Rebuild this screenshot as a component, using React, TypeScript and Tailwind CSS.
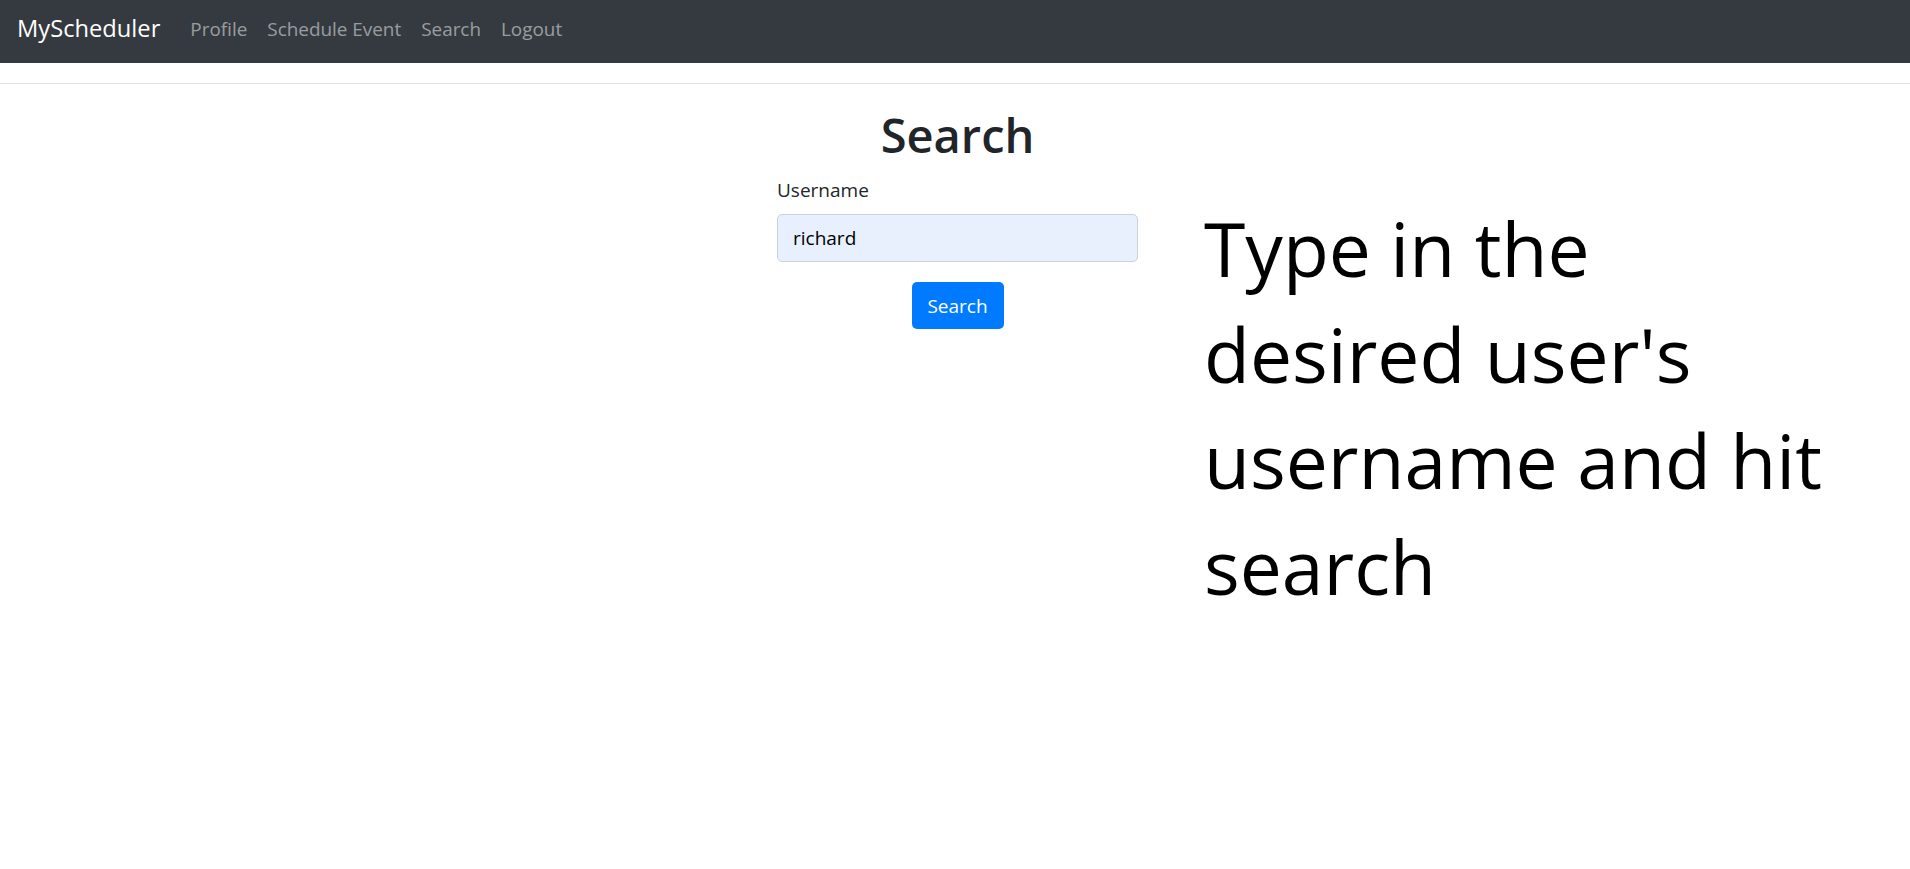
const font = { fontFamily: '"Open Sans", "Noto Sans", sans-serif' };

const links = ["Profile", "Schedule Event", "Search", "Logout"];

export default function App() {
  return (
    <div className="min-h-screen bg-white" style={font}>
      <nav className="flex h-[63px] items-center bg-[#343a40] px-[17px] pb-[5px]">
        <a href="#" className="mr-[20px] text-[23.7px] text-white">
          MyScheduler
        </a>
        <div className="flex items-center">
          {links.map((l) => (
            <a key={l} href="#" className="px-[10px] text-[18.9px] text-white/50">
              {l}
            </a>
          ))}
        </div>
      </nav>

      <div className="mt-[20px] h-px bg-[#e3e3e3]" />

      <main className="grid grid-cols-[1fr_361px_1fr] pl-[5px] pt-[23px]">
        <div />
        <div className="flex flex-col">
          <h1 className="mb-[12px] text-center text-[47px] font-semibold leading-[1.2] text-[#212529]">
            Search
          </h1>
          <label className="mb-[9px] text-[19px] leading-[30px] text-[#212529]">Username</label>
          <input
            defaultValue="richard"
            className="h-[48px] rounded-[5px] border border-[#c9d1da] bg-[#e8f0fe] px-[15px] text-[19px] text-black outline-none"
          />
          <button
            type="button"
            className="mx-auto mt-[20px] h-[47px] w-[92px] rounded-[5px] bg-[#007bff] text-[19px] text-white"
          >
            Search
          </button>
        </div>
        <div className="pl-[66px] pt-[88px]">
          <p className="w-[660px] text-[75px] leading-[106px] text-black">
            Type in the desired user's username and hit search
          </p>
        </div>
      </main>
    </div>
  );
}
